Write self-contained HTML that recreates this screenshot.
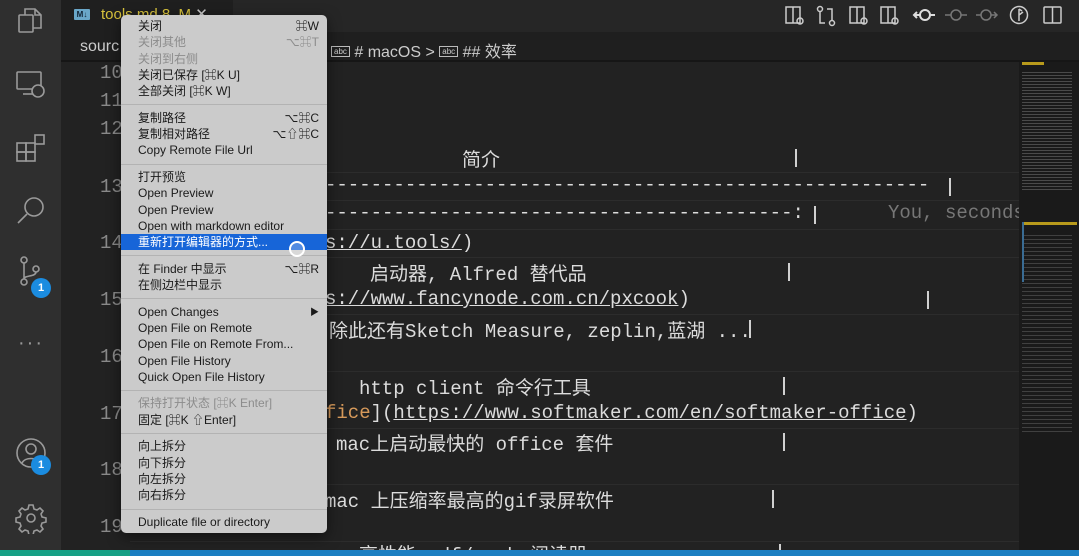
<!DOCTYPE html>
<html><head><meta charset="utf-8"><style>
*{margin:0;padding:0;box-sizing:border-box}
html,body{width:1079px;height:556px;overflow:hidden}
body{background:#1f1f1f;position:relative;font-family:"Liberation Sans","Noto Sans CJK SC",sans-serif}
.act{position:absolute;left:0;top:0;width:61px;height:556px;background:#2f2f2f}
.tabs{position:absolute;left:61px;top:0;width:1018px;height:32px;background:#262626}
.tab{position:absolute;left:0;top:0;width:172px;height:32px;background:#1f1f1f;color:#d7c23c;font-size:15px;padding:5px 0 0 40px}
.crumb{position:absolute;left:61px;top:32px;width:1018px;height:30px;background:#1f1f1f;color:#ccc;font-size:16px;border-bottom:2px solid #161616}
.editor{position:absolute;left:61px;top:62px;width:958px;height:488px;background:#222}
.ln{position:absolute;left:100px;color:#8a8a8a;font:19px "Liberation Mono",monospace}
.t{position:absolute;color:#dcdcdc;font:19px "Liberation Mono","Noto Sans CJK SC",monospace;white-space:pre}
.p{position:absolute;width:2px;height:18px;background:#d0d0d0}
.u{text-decoration:underline}
.hr{position:absolute;left:130px;width:890px;height:1px;background:#2c2c2c}
.mini{position:absolute;left:1019px;top:62px;width:60px;height:488px;background:#1a1a1a}
.status{position:absolute;left:0;top:550px;width:1079px;height:6px;background:#1b7fc2}
.menu{position:absolute;left:121px;top:15px;width:206px;height:518px;background:#cbcbcb;border-radius:5px;padding-top:3px;box-shadow:0 4px 14px rgba(0,0,0,.5)}
.i{height:16.3px;line-height:16.3px;font-size:12px;color:#1a1a1a;padding-left:17px;position:relative;white-space:nowrap}
.i.d{color:#8c8c8c}
.i.h{background:#1765d8;color:#fff}
.i span{position:absolute;right:8px;top:0}
.s{height:10.3px;position:relative}
.s:after{content:"";position:absolute;left:0;right:0;top:5px;height:1px;background:#b3b3b3}
.ic{position:absolute;stroke:#9a9a9a;fill:none;stroke-width:1.6}
.badge{position:absolute;width:20px;height:20px;border-radius:50%;background:#1b8ce0;color:#fff;font-size:11px;font-weight:bold;text-align:center;line-height:20px}
.ti{position:absolute;top:5px;stroke:#ccc;fill:none;stroke-width:1.5}
</style></head><body>
<div class="act">
<svg class="ic" style="left:16px;top:6px" width="30" height="30" viewBox="0 0 30 30"><rect x="3" y="9" width="14" height="17" rx="1"/><path d="M9 9V3h10l6 6v13H17M19 3v6h6"/></svg>
<svg class="ic" style="left:15px;top:68px" width="32" height="32" viewBox="0 0 32 32"><rect x="2" y="4" width="24" height="17" rx="1"/><path d="M8 26h10"/><circle cx="23" cy="23" r="6" fill="#2f2f2f"/></svg>
<svg class="ic" style="left:15px;top:133px" width="32" height="32" viewBox="0 0 32 32"><rect x="2" y="10" width="9" height="9"/><rect x="11" y="10" width="9" height="9"/><rect x="2" y="19" width="9" height="9"/><rect x="11" y="19" width="9" height="9"/><rect x="20" y="2" width="9" height="9"/></svg>
<svg class="ic" style="left:15px;top:195px" width="32" height="32" viewBox="0 0 32 32"><circle cx="19" cy="12" r="9"/><path d="M12 19L3 28"/></svg>
<svg class="ic" style="left:18px;top:256px" width="30" height="30" viewBox="0 0 30 30"><circle cx="6" cy="4" r="3"/><circle cx="6" cy="26" r="3"/><circle cx="18" cy="13" r="3"/><path d="M6 7v16M18 16c0 5-12 3-12 7"/></svg>
<div class="badge" style="left:31px;top:278px">1</div>
<div style="position:absolute;left:18px;top:332px;color:#999;font-size:20px;letter-spacing:2px">···</div>
<svg class="ic" style="left:15px;top:437px" width="32" height="32" viewBox="0 0 32 32"><circle cx="16" cy="16" r="14"/><circle cx="16" cy="12" r="5"/><path d="M7 26c3-6 15-6 18 0"/></svg>
<div class="badge" style="left:31px;top:455px">1</div>
<svg class="ic" style="left:15px;top:502px" width="32" height="32" viewBox="0 0 32 32"><circle cx="16" cy="16" r="4"/><path d="M14 3h4l1 4 3 1 3-2 3 3-2 3 1 3 4 1v4l-4 1-1 3 2 3-3 3-3-2-3 1-1 4h-4l-1-4-3-1-3 2-3-3 2-3-1-3-4-1v-4l4-1 1-3-2-3 3-3 3 2 3-1z"/></svg>
</div>
<div class="tabs"><div class="tab"><span style="position:absolute;left:13px;top:9px;width:16px;height:11px;background:#6aa7c9;border-radius:1px;font-size:8px;color:#123;line-height:11px;text-align:center;font-weight:bold">M↓</span>tools.md 8, M <span style="color:#ccc">✕</span></div>
<svg class="ti" style="left:723px" width="22" height="22" viewBox="0 0 22 22"><rect x="2" y="2" width="14" height="16"/><path d="M9 2v16"/><circle cx="16" cy="16" r="3"/></svg>
<svg class="ti" style="left:754px" width="22" height="22" viewBox="0 0 22 22"><circle cx="5" cy="4" r="2.5"/><circle cx="17" cy="18" r="2.5"/><path d="M5 7v11h5M17 15V4h-5"/></svg>
<svg class="ti" style="left:787px" width="22" height="22" viewBox="0 0 22 22"><rect x="2" y="2" width="14" height="16"/><path d="M9 2v16"/><circle cx="16" cy="16" r="3"/></svg>
<svg class="ti" style="left:818px" width="22" height="22" viewBox="0 0 22 22"><rect x="2" y="2" width="14" height="16"/><path d="M9 2v16"/><circle cx="16" cy="16" r="3"/></svg>
<svg class="ti" style="left:851px;stroke:#ddd;stroke-width:2" width="24" height="22" viewBox="0 0 24 22"><circle cx="13" cy="10" r="5"/><path d="M2 10h6M18 10h5M5 7l-3 3 3 3"/></svg>
<svg class="ti" style="left:883px;stroke:#777" width="24" height="22" viewBox="0 0 24 22"><circle cx="12" cy="10" r="5"/><path d="M1 10h6M17 10h6"/></svg>
<svg class="ti" style="left:914px;stroke:#777" width="24" height="22" viewBox="0 0 24 22"><circle cx="11" cy="10" r="5"/><path d="M1 10h5M16 10h6M19 7l3 3-3 3"/></svg>
<svg class="ti" style="left:947px" width="22" height="22" viewBox="0 0 22 22"><circle cx="11" cy="10" r="8.5"/><path d="M11 4v12M11 10l4-3M11 4l3 2"/></svg>
<svg class="ti" style="left:981px" width="22" height="22" viewBox="0 0 22 22"><rect x="2" y="2" width="17" height="16" rx="1"/><path d="M10.5 2v16"/></svg>
</div>
<div class="crumb"><span style="position:absolute;left:19px;top:6px">sourc</span><span style="position:absolute;left:270px;top:6px"><span style="border:1px solid #bbb;font-size:8px;padding:0 2px;vertical-align:3px">abc</span> # macOS &gt; <span style="border:1px solid #bbb;font-size:8px;padding:0 2px;vertical-align:3px">abc</span> ## 效率</span></div>
<div class="editor"></div>
<div class="hr" style="top:172px"></div><div class="hr" style="top:200px"></div><div class="hr" style="top:229px"></div><div class="hr" style="top:257px"></div><div class="hr" style="top:314px"></div><div class="hr" style="top:371px"></div><div class="hr" style="top:428px"></div><div class="hr" style="top:484px"></div><div class="hr" style="top:541px"></div>
<div class="ln" style="top:62px">10</div><div class="ln" style="top:90px">11</div><div class="ln" style="top:118px">12</div><div class="ln" style="top:176px">13</div><div class="ln" style="top:232px">14</div><div class="ln" style="top:289px">15</div><div class="ln" style="top:346px">16</div><div class="ln" style="top:403px">17</div><div class="ln" style="top:459px">18</div><div class="ln" style="top:516px">19</div>
<div class="t" style="left:462px;top:145px">简介</div><div class="p" style="left:795px;top:149px"></div>
<div class="t" style="left:325px;top:174px">-----------------------------------------------------</div><div class="p" style="left:949px;top:178px"></div>
<div class="t" style="left:325px;top:202px">-----------------------------------------:</div><div class="p" style="left:814px;top:206px"></div>
<div class="t" style="left:888px;top:202px;color:#777">You, seconds</div>
<div class="t" style="left:325px;top:232px"><span class="u">s://u.tools/</span>)</div>
<div class="t" style="left:370px;top:259px">启动器, Alfred 替代品</div><div class="p" style="left:788px;top:263px"></div>
<div class="t" style="left:325px;top:288px"><span class="u">s://www.fancynode.com.cn/pxcook</span>)</div><div class="p" style="left:927px;top:291px"></div>
<div class="t" style="left:329px;top:316px">除此还有Sketch Measure, zeplin,蓝湖 ...</div><div class="p" style="left:749px;top:320px"></div>
<div class="t" style="left:359px;top:373px">http client 命令行工具</div><div class="p" style="left:783px;top:377px"></div>
<div class="t" style="left:325px;top:402px"><span style="color:#d79a5b">fice</span>](<span class="u">https://www.softmaker.com/en/softmaker-office</span>)</div>
<div class="t" style="left:336px;top:429px">mac上启动最快的 office 套件</div><div class="p" style="left:783px;top:433px"></div>
<div class="t" style="left:325px;top:486px">mac 上压缩率最高的gif录屏软件</div><div class="p" style="left:772px;top:490px"></div>
<div class="t" style="left:359px;top:540px">高性能 pdf/epub 阅读器</div><div class="p" style="left:779px;top:544px"></div>
<div class="mini">
<div style="position:absolute;left:3px;top:0;width:22px;height:3px;background:#b89a1c"></div>
<div style="position:absolute;left:3px;top:8px;width:50px;height:120px;background:repeating-linear-gradient(#1a1a1a 0 2px,#4a4a4a 2px 3px)"></div>
<div style="position:absolute;left:3px;top:160px;width:55px;height:3px;background:#b89a1c"></div>
<div style="position:absolute;left:3px;top:170px;width:50px;height:200px;background:repeating-linear-gradient(#1a1a1a 0 3px,#404040 3px 4px)"></div>
<div style="position:absolute;left:3px;top:160px;width:2px;height:60px;background:#3a6c94"></div>
</div>
<div class="status"><div style="width:130px;height:6px;background:#16a085"></div></div>
<div class="menu">
<div class="i">关闭<span>⌘W</span></div>
<div class="i d">关闭其他<span>⌥⌘T</span></div>
<div class="i d">关闭到右侧</div>
<div class="i">关闭已保存 [⌘K U]</div>
<div class="i">全部关闭 [⌘K W]</div>
<div class="s"></div>
<div class="i">复制路径<span>⌥⌘C</span></div>
<div class="i">复制相对路径<span>⌥⇧⌘C</span></div>
<div class="i">Copy Remote File Url</div>
<div class="s"></div>
<div class="i">打开预览</div>
<div class="i">Open Preview</div>
<div class="i">Open Preview</div>
<div class="i">Open with markdown editor</div>
<div class="i h">重新打开编辑器的方式...</div>
<div class="s"></div>
<div class="i">在 Finder 中显示<span>⌥⌘R</span></div>
<div class="i">在侧边栏中显示</div>
<div class="s"></div>
<div class="i">Open Changes<span style="font-size:9px">▶</span></div>
<div class="i">Open File on Remote</div>
<div class="i">Open File on Remote From...</div>
<div class="i">Open File History</div>
<div class="i">Quick Open File History</div>
<div class="s"></div>
<div class="i d">保持打开状态 [⌘K Enter]</div>
<div class="i">固定 [⌘K ⇧Enter]</div>
<div class="s"></div>
<div class="i">向上拆分</div>
<div class="i">向下拆分</div>
<div class="i">向左拆分</div>
<div class="i">向右拆分</div>
<div class="s"></div>
<div class="i">Duplicate file or directory</div>
</div>
<div style="position:absolute;left:289px;top:241px;width:16px;height:16px;border-radius:50%;border:2px solid #fff;background:rgba(255,255,255,.25)"></div>
</body></html>
